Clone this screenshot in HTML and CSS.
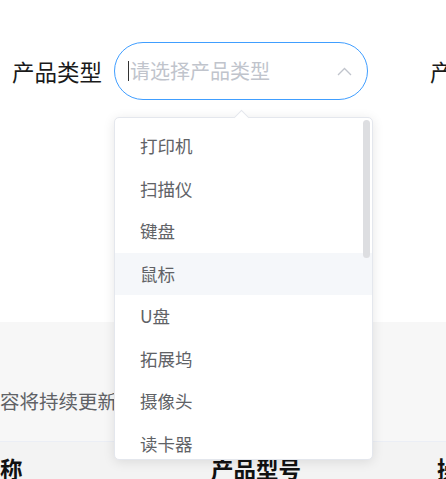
FILE: index.html
```html
<!DOCTYPE html>
<html lang="zh-CN">
<head>
<meta charset="utf-8">
<title>产品类型</title>
<link rel="stylesheet" href="styles.css">
</head>
<body>
<div class="page">
  <section class="filter">
    <div class="field">
      <label class="label">产品类型</label>
      <div class="select">
        <span class="caret"></span><span class="placeholder">请选择产品类型</span>
        <svg class="arrow" width="15" height="9" viewBox="0 0 15 9"><path d="M1 8 L7.5 1.5 L14 8" fill="none" stroke="#c0c4cc" stroke-width="1.3"/></svg>
      </div>
    </div>
    <div class="field">
      <label class="label">产品类型</label>
    </div>
  </section>
  <section class="notice">
    <p class="notice-text">容将持续更新</p>
  </section>
  <div class="thead">
    <span class="th">称</span>
    <span class="th">产品型号</span>
    <span class="th">操</span>
  </div>

  <div class="dropdown">
    <span class="popper-arrow"></span>
    <ul class="options">
      <li class="option">打印机</li>
      <li class="option">扫描仪</li>
      <li class="option">键盘</li>
      <li class="option hover">鼠标</li>
      <li class="option">U盘</li>
      <li class="option">拓展坞</li>
      <li class="option">摄像头</li>
      <li class="option">读卡器</li>
      <li class="option">显示器</li>
    </ul>
    <span class="scroll-thumb"></span>
  </div>
</div>
</body>
</html>
```

FILE: styles.css
```css
* { box-sizing: border-box; }
html, body { margin: 0; padding: 0; background: #fff; }
body {
  font-family: "Noto Sans CJK SC", "Noto Sans", sans-serif;
}
.page {
  position: relative;
  width: 446px;
  height: 479px;
  overflow: hidden;
}
.filter {
  height: 322px;
  padding: 42px 0 0 12px;
  display: flex;
  align-items: flex-start;
  gap: 62px;
  white-space: nowrap;
  background: #fff;
}
.field {
  display: flex;
  align-items: center;
  height: 58px;
  flex-shrink: 0;
}
.label {
  font-size: 22.5px;
  line-height: 1;
  color: #1a1a1a;
  margin-right: 12px;
}
.select {
  position: relative;
  width: 254px;
  height: 58px;
  border: 1px solid #409eff;
  border-radius: 29px;
  display: flex;
  align-items: center;
  padding-left: 13px;
}
.caret {
  display: inline-block;
  width: 1px;
  height: 20px;
  background: #333;
  margin-right: 1px;
}
.placeholder {
  font-size: 20px;
  line-height: 1;
  color: #c0c4cc;
}
.arrow {
  position: absolute;
  right: 15px;
  top: 24px;
}
.notice {
  height: 120px;
  background: #f7f7f7;
  border-bottom: 1px solid #ebeef5;
  padding-top: 65px;
}
.notice-text {
  margin: 0;
  font-size: 19.5px;
  line-height: 28px;
  color: #606266;
  white-space: nowrap;
}
.thead {
  height: 37px;
  background: #f3f3f3;
  display: grid;
  grid-template-columns: 211px 226px auto;
  padding-top: 15px;
  white-space: nowrap;
}
.th {
  font-size: 22.5px;
  line-height: 1;
  font-weight: 700;
  color: #111;
}
.dropdown {
  position: absolute;
  left: 114px;
  top: 117px;
  width: 259px;
  height: 343px;
  background: #fff;
  border: 1px solid #e4e7ed;
  border-radius: 5px;
  box-shadow: 0 2px 12px 0 rgba(0, 0, 0, 0.1);
}
.popper-arrow {
  position: absolute;
  left: 121px;
  top: -6.5px;
  width: 11px;
  height: 11px;
  background: #fff;
  border-top: 1px solid #e4e7ed;
  border-left: 1px solid #e4e7ed;
  transform: rotate(45deg);
}
.options {
  list-style: none;
  margin: 0;
  padding: 7px 0 0;
  height: 100%;
  overflow: hidden;
  border-radius: 5px;
  position: relative;
}
.option {
  height: 42.5px;
  line-height: 42.5px;
  padding: 0 25px;
  font-size: 17.5px;
  color: #606266;
  white-space: nowrap;
}
.option.hover {
  background: #f5f7fa;
}
.scroll-thumb {
  position: absolute;
  right: 2px;
  top: 2px;
  width: 7px;
  height: 138px;
  border-radius: 4px;
  background: #dddee1;
}
```
